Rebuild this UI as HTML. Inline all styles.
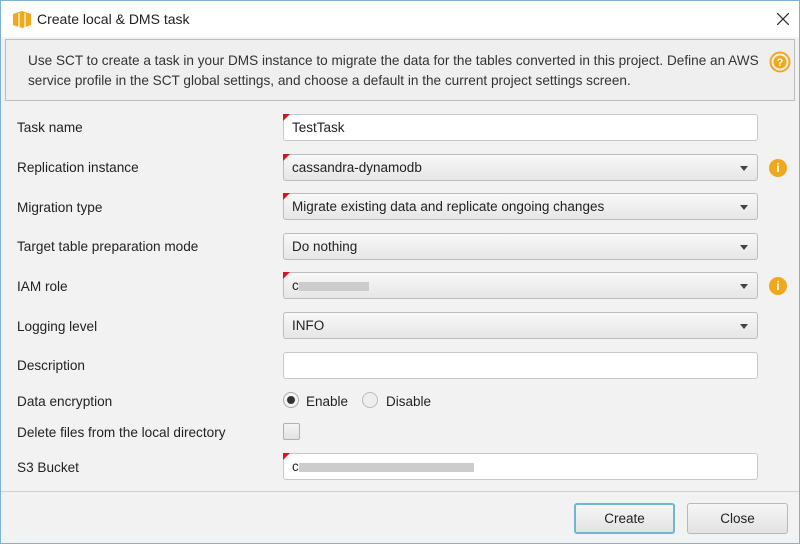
<!DOCTYPE html><html><head><style>
body{margin:0;width:800px;height:544px;overflow:hidden;font-family:"Liberation Sans",sans-serif;font-size:13.5px;color:#222;background:#f2f2f2;position:relative}
.win{position:absolute;left:0;top:0;width:798px;height:542px;border:1px solid #7fb0d6;background:#f2f2f2}
.title{position:absolute;left:0;top:0;width:798px;height:36px;background:#fff}
.title span{position:absolute;left:36px;top:10px;font-size:14px}
.info{position:absolute;left:4px;top:38px;width:790px;height:62px;background:#efefef;border:1px solid #bdbdbd;box-sizing:border-box}
.info p{margin:0;position:absolute;left:22px;top:11px;line-height:20px;font-size:13.6px;color:#333;white-space:nowrap}
.lbl{position:absolute;left:16px;font-size:13.6px}
.f{position:absolute;left:282px;width:475px;height:27px;box-sizing:border-box;border:1px solid #c8c8c8;border-radius:3px;background:#fff;padding-left:8px;line-height:25px}
.s{background:linear-gradient(#f8f8f8,#e6e6e6);border-color:#bdbdbd}
.s:after{content:"";position:absolute;right:9px;top:11px;border:4px solid transparent;border-top:5px solid #444;border-bottom:0}
.r:before{content:"";position:absolute;left:-1px;top:-1px;border-top:7px solid #e01020;border-right:7px solid transparent}
.i{position:absolute;left:768px;width:18px;height:18px;border-radius:50%;background:#f0a81c;color:#fff;font-weight:bold;font-size:12px;text-align:center;line-height:18px}
.blur{display:inline-block;height:9px;background:#ccc;vertical-align:middle}
.btn{position:absolute;top:502px;height:31px;width:101px;box-sizing:border-box;border:1px solid #b8b8b8;border-radius:3px;background:linear-gradient(#f6f6f6,#e2e2e2);text-align:center;line-height:29px}
</style></head><body><div class="win">
<div class="title">
<svg style="position:absolute;left:11px;top:9px" width="20" height="18"><path d="M1 4 L10 1 L19 4 L19 15 L10 18 L1 15Z" fill="#f0a81c"/><path d="M7 3V17M13 3V17" stroke="#fff" stroke-width="1.2"/></svg>
<span>Create local &amp; DMS task</span>
<svg style="position:absolute;left:776px;top:12px" width="12" height="12"><path d="M0 0L12 12M12 0L0 12" stroke="#333" stroke-width="1.3"/></svg>
</div>
<div class="info"><p>Use SCT to create a task in your DMS instance to migrate the data for the tables converted in this project. Define an AWS<br>service profile in the SCT global settings, and choose a default in the current project settings screen.</p>
<svg style="position:absolute;left:763px;top:11px" width="22" height="22"><circle cx="11" cy="11" r="9.5" fill="none" stroke="#f0a81c" stroke-width="2"/><circle cx="11" cy="11" r="6.5" fill="#f0a81c"/><text x="11" y="15" font-size="11" font-weight="bold" fill="#fff" text-anchor="middle" font-family="Liberation Sans">?</text></svg></div>
<div class="lbl" style="top:119px">Task name</div><div class="f r" style="top:113px">TestTask</div>
<div class="lbl" style="top:159px">Replication instance</div><div class="f s r" style="top:153px">cassandra-dynamodb</div><div class="i" style="top:158px">i</div>
<div class="lbl" style="top:199px">Migration type</div><div class="f s r" style="top:192px">Migrate existing data and replicate ongoing changes</div>
<div class="lbl" style="top:238px">Target table preparation mode</div><div class="f s" style="top:232px">Do nothing</div>
<div class="lbl" style="top:278px">IAM role</div><div class="f s r" style="top:271px">c<span class="blur" style="width:70px"></span></div><div class="i" style="top:276px">i</div>
<div class="lbl" style="top:318px">Logging level</div><div class="f s" style="top:311px">INFO</div>
<div class="lbl" style="top:357px">Description</div><div class="f" style="top:351px"></div>
<div class="lbl" style="top:393px">Data encryption</div>
<div style="position:absolute;left:282px;top:391px;width:16px;height:16px;border-radius:50%;border:1px solid #aaa;box-sizing:border-box;background:#f4f4f4"><div style="position:absolute;left:3px;top:3px;width:8px;height:8px;border-radius:50%;background:#333"></div></div>
<div style="position:absolute;left:305px;top:393px">Enable</div>
<div style="position:absolute;left:361px;top:391px;width:16px;height:16px;border-radius:50%;border:1px solid #bbb;box-sizing:border-box;background:#eee"></div>
<div style="position:absolute;left:385px;top:393px">Disable</div>
<div class="lbl" style="top:424px">Delete files from the local directory</div>
<div style="position:absolute;left:282px;top:422px;width:17px;height:17px;border:1px solid #b0b0b0;border-radius:2px;box-sizing:border-box;background:linear-gradient(#f4f4f4,#e2e2e2)"></div>
<div class="lbl" style="top:459px">S3 Bucket</div><div class="f r" style="top:452px">c<span class="blur" style="width:175px"></span></div>
<div style="position:absolute;left:0;top:490px;width:798px;border-top:1px solid #cfcfcf"></div>
<div class="btn" style="left:573px;border:2px solid #6fb7cf;line-height:27px">Create</div>
<div class="btn" style="left:686px">Close</div>
</div></body></html>
